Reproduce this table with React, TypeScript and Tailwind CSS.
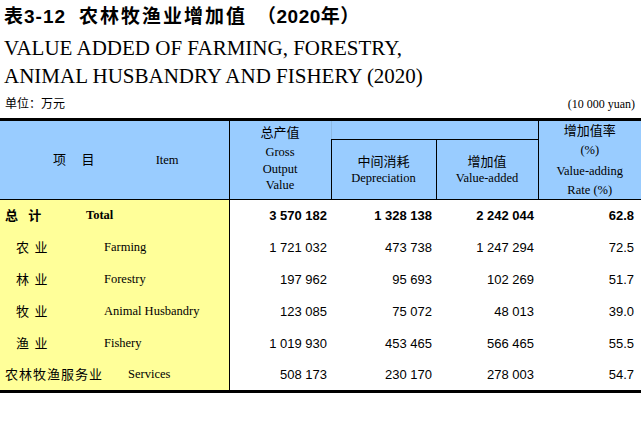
const SANS = "font-['Liberation_Sans','Noto_Sans_CJK_SC',sans-serif]";
const SERIF = "font-['Liberation_Serif','Noto_Sans_CJK_SC',serif]";

type Row = {
  cn: string;
  en: string;
  cnBox: string;
  vals: string[];
  bold?: boolean;
};

const rows: Row[] = [
  { cn: '总  计', en: 'Total', cnBox: 'pl-[5px] w-[86px]', vals: ['3 570 182', '1 328 138', '2 242 044', '62.8'], bold: true },
  { cn: '农 业', en: 'Farming', cnBox: 'pl-[16px] w-[104px]', vals: ['1 721 032', '473 738', '1 247 294', '72.5'] },
  { cn: '林 业', en: 'Forestry', cnBox: 'pl-[16px] w-[104px]', vals: ['197 962', '95 693', '102 269', '51.7'] },
  { cn: '牧 业', en: 'Animal Husbandry', cnBox: 'pl-[16px] w-[104px]', vals: ['123 085', '75 072', '48 013', '39.0'] },
  { cn: '渔 业', en: 'Fishery', cnBox: 'pl-[16px] w-[104px]', vals: ['1 019 930', '453 465', '566 465', '55.5'] },
  { cn: '农林牧渔服务业', en: 'Services', cnBox: 'pl-[5px] w-[128px]', vals: ['508 173', '230 170', '278 003', '54.7'] },
];

const numPad = ['pr-[4px]', 'pr-[4px]', 'pr-[4px]', 'pr-[7px]'];

export default function App() {
  return (
    <div className="w-[641px] h-[423px] bg-white text-black overflow-hidden">
      <div className={`${SANS} font-bold text-[19px] h-[34px] pl-[4px] flex items-center`}>
        <span className="tracking-[1px]">表3-12</span>
        <span className="ml-[13px] tracking-[2px]">农林牧渔业增加值</span>
        <span className="ml-[10px] tracking-[0.5px]">（2020年）</span>
      </div>
      <div className={`${SERIF} text-[21px] leading-[28px] pl-[4px]`}>
        <div>VALUE ADDED OF FARMING, FORESTRY,</div>
        <div>ANIMAL HUSBANDRY AND FISHERY (2020)</div>
      </div>
      <div className="flex justify-between items-center h-[28px]">
        <span className={`${SANS} text-[12px] pl-[5px]`}>单位：万元</span>
        <span className={`${SERIF} text-[12px] pr-[6px]`}>(10 000 yuan)</span>
      </div>

      <table className="border-collapse table-fixed w-[641px]">
        <colgroup>
          <col className="w-[229px]" />
          <col className="w-[102px]" />
          <col className="w-[105px]" />
          <col className="w-[102px]" />
          <col className="w-[103px]" />
        </colgroup>
        <thead className="bg-[#99ccff]">
          <tr className="h-[20px] border-t-[3px] border-black">
            <th rowSpan={2} className="border-r border-black font-normal p-0">
              <div className="flex items-center">
                <span className={`${SANS} text-[13px] pl-[53px] tracking-[6px]`}>项 目</span>
                <span className={`${SERIF} text-[12.5px] pl-[55px]`}>Item</span>
              </div>
            </th>
            <th rowSpan={2} className="font-normal p-0 align-top">
              <div className="flex flex-col items-center pt-[3px]">
                <span className={`${SANS} text-[13px] leading-[18px]`}>总产值</span>
                <span className={`${SERIF} text-[12.5px] leading-[18px] mt-[1px]`}>Gross</span>
                <span className={`${SERIF} text-[12.5px] leading-[16px]`}>Output</span>
                <span className={`${SERIF} text-[12.5px] leading-[17px]`}>Value</span>
              </div>
            </th>
            <th colSpan={2} className="border-b border-b-black border-l border-l-[#8db9e3] border-r border-r-black font-normal p-0" />
            <th rowSpan={2} className="font-normal p-0 align-top">
              <div className="flex flex-col items-center pt-[1px]">
                <span className={`${SANS} text-[13px] leading-[18px]`}>增加值率</span>
                <span className={`${SERIF} text-[12.5px] leading-[20px]`}>(%)</span>
                <span className={`${SERIF} text-[12.5px] leading-[20px] mt-[1px]`}>Value-adding</span>
                <span className={`${SERIF} text-[12.5px] leading-[18px]`}>Rate (%)</span>
              </div>
            </th>
          </tr>
          <tr className="h-[59px] border-b border-black">
            <th className="border-r border-l border-black font-normal p-0">
              <div className="flex flex-col items-center pt-[1px]">
                <span className={`${SANS} text-[13px] leading-[16px]`}>中间消耗</span>
                <span className={`${SERIF} text-[12.5px] leading-[16px]`}>Depreciation</span>
              </div>
            </th>
            <th className="border-r border-black font-normal p-0">
              <div className="flex flex-col items-center pt-[1px]">
                <span className={`${SANS} text-[13px] leading-[16px]`}>增加值</span>
                <span className={`${SERIF} text-[12.5px] leading-[16px]`}>Value-added</span>
              </div>
            </th>
          </tr>
        </thead>
        <tbody className="border-b-[3px] border-black">
          {rows.map((r) => (
            <tr key={r.en} className="h-[32px]">
              <td className="bg-[#ffff99] border-r border-black p-0">
                <div className="flex items-center">
                  <span
                    className={`${SANS} text-[13px] ${r.cnBox} ${r.bold ? 'font-bold' : ''} shrink-0 whitespace-pre tracking-[1px]`}
                  >
                    {r.cn}
                  </span>
                  <span className={`${SERIF} text-[12.5px] whitespace-nowrap ${r.bold ? 'font-bold' : ''}`}>{r.en}</span>
                </div>
              </td>
              {r.vals.map((v, i) => (
                <td key={i} className={`${SANS} text-[13px] text-right p-0 ${numPad[i]} ${r.bold ? 'font-bold' : ''}`}>
                  {v}
                </td>
              ))}
            </tr>
          ))}
        </tbody>
      </table>
    </div>
  );
}
